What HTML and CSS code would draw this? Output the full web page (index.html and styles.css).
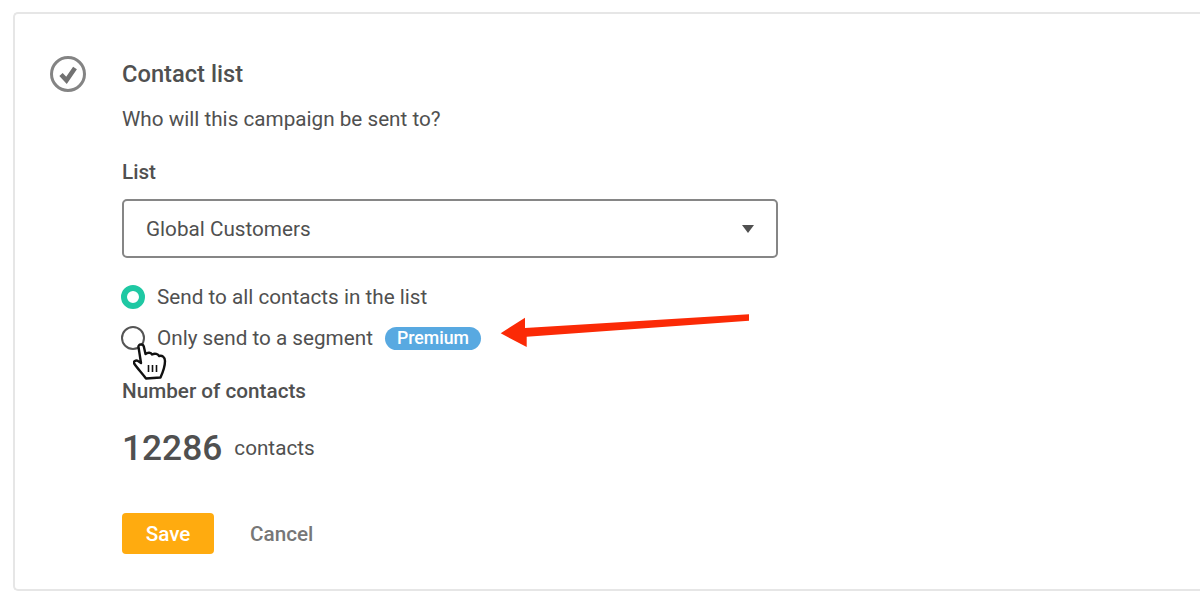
FILE: index.html
```html
<!DOCTYPE html>
<html lang="en">

<head>
	<meta charset="UTF-8">
	<meta name="viewport" content="width=device-width, initial-scale=1.0">
	<title>Contact list</title>
	<link rel="stylesheet" href="styles.css">
</head>

<body>
	<div class="card">
		<svg class="status-icon" width="36" height="36" viewBox="0 0 36 36">
			<circle cx="18" cy="18" r="16.5" fill="none" stroke="#848484" stroke-width="3"></circle>
			<path d="M11 18.500l5.500 5.800L25 12" fill="none" stroke="#727272" stroke-width="4.600"></path>
		</svg>

		<div class="content">
			<h2 class="title">Contact list</h2>
			<p class="question">Who will this campaign be sent to?</p>

			<div class="label list-label">List</div>
			<div class="select">
				<span>Global Customers</span>
				<span class="caret"></span>
			</div>

			<div class="radio-row first">
				<span class="radio checked"></span>
				<span>Send to all contacts in the list</span>
			</div>
			<div class="radio-row second">
				<span class="radio"></span>
				<span>Only send to a segment</span>
				<span class="badge">Premium</span>

				<svg class="cursor" width="34" height="38" viewBox="0 0 34 38">
					<path d="M5.500 4C5 1 10 .5 10.800 3.500L12.500 11C15 9 18 9.500 19 11.500 22 10 25 11 26 13 29 12 32 14 32 18 32 24 30 29 27.500 34.500L13 35.500C9 30 4 25 1.200 20.500 0 18.500 3 16.500 5 18L8 20z" fill="#fff" stroke="#111" stroke-width="2.400" stroke-linejoin="round"></path>
					<path d="M15.500 22v7M19.500 22v7M23.500 22v7" stroke="#111" stroke-width="1.600"></path>
				</svg>

				<svg class="arrow" width="250" height="36" viewBox="0 0 250 36">
					<path d="M.7 20.300L25 4.700 25 15 249 1.300V7.700L26.700 23.700V34z" fill="#fb2a06"></path>
				</svg>
			</div>

			<div class="label count-label">Number of contacts</div>
			<div class="count">
				<span class="number">12286</span>
				<span>contacts</span>
			</div>

			<div class="actions">
				<button class="save">Save</button>
				<span class="cancel">Cancel</span>
			</div>
		</div>
	</div>
</body>

</html>
```

FILE: styles.css
```css
html,
body {
	margin: 0;
	height: 603px;
	overflow: hidden;
	background-color: white;
	font-family: 'Roboto', sans-serif;
	color: #505050;
}

.card {
	box-sizing: border-box;
	display: flex;
	width: 1187px;
	height: 579px;
	margin: 12px 0 0 13px;
	padding: 42px 0 0 35px;
	border: 2px solid #e6e6e6;
	border-right: none;
	border-radius: 5px 0 0 5px;
}

.status-icon {
	flex: none;
}

.content {
	margin-left: 36px;
	width: 656px;
	font-size: 20.7px;
	line-height: 24px;
}

.title {
	margin: 4px 0 0;
	font-size: 23.7px;
	line-height: 28px;
	font-weight: 500;
}

.question {
	margin: 19px 0 0;
	line-height: 24px;
}

.label {
	font-weight: 500;
}

.list-label {
	margin-top: 29px;
}

.select {
	box-sizing: border-box;
	display: flex;
	align-items: center;
	justify-content: space-between;
	height: 59px;
	margin-top: 15px;
	padding: 0 22px 0 22px;
	border: 2px solid #868686;
	border-radius: 5px;
}

.caret {
	width: 0;
	height: 0;
	border-left: 6px solid transparent;
	border-right: 6px solid transparent;
	border-top: 8px solid #505050;
}

.radio-row {
	position: relative;
	display: flex;
	align-items: center;
	height: 24px;
}

.radio-row.first {
	margin-top: 27px;
}

.radio-row.second {
	margin-top: 17px;
}

.radio {
	box-sizing: border-box;
	flex: none;
	width: 24px;
	height: 24px;
	margin: 0 12px 0 -1px;
	border: 2px solid #555;
	border-radius: 50%;
	background: white;
}

.radio.checked {
	border: 6.500px solid #1fc8a3;
}

.badge {
	margin-left: 12px;
	padding: 0 12px;
	height: 23px;
	border-radius: 12px;
	background: #58a9e1;
	color: white;
	font-size: 17.700px;
	font-weight: 500;
	line-height: 23px;
}

.cursor {
	position: absolute;
	left: 11px;
	top: 17px;
}

.arrow {
	position: absolute;
	left: 378px;
	top: -13px;
}

.count-label {
	margin-top: 29px;
}

.count {
	display: flex;
	align-items: center;
	gap: 12px;
	margin-top: 23px;
}

.number {
	font-size: 35.300px;
	line-height: 44px;
	font-weight: 500;
}

.actions {
	display: flex;
	align-items: center;
	gap: 36px;
	margin-top: 43px;
}

.save {
	width: 92px;
	height: 41px;
	border: none;
	border-radius: 4px;
	background: #ffab0f;
	color: white;
	font-family: inherit;
	font-size: 20.700px;
	font-weight: 500;
}

.cancel {
	color: #777;
	font-weight: 500;
}
```
